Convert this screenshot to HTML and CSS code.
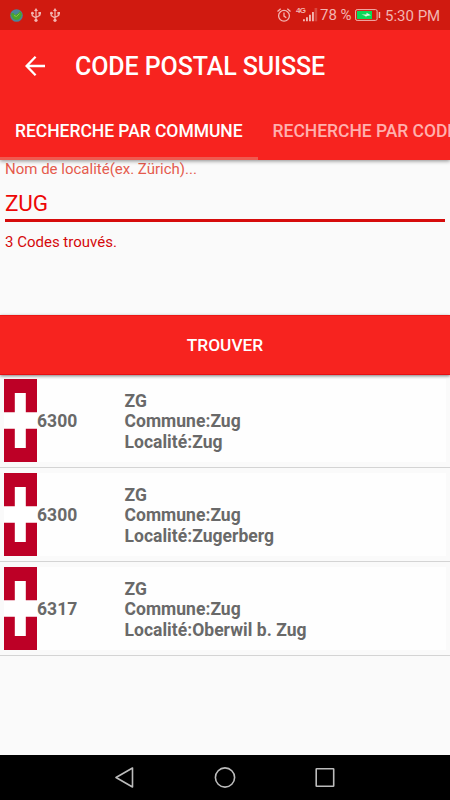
FILE: index.html
```html
<!DOCTYPE html>
<html lang="fr">
<head>
<meta charset="utf-8">
<title>Code Postal Suisse</title>
<link rel="stylesheet" href="styles.css">
</head>
<body>
<svg class="defs" width="0" height="0" aria-hidden="true">
  <symbol id="usb" viewBox="0 0 10 14">
    <path d="M5 2v10M1.200 5v2.600L5 10M8.800 5v2.300L5 9.500" fill="none" stroke="currentColor" stroke-width="1.200"/>
    <path d="M5 0l2 3H3z" fill="currentColor"/>
    <circle cx="5" cy="12.300" r="1.600" fill="currentColor"/>
    <circle cx="1.400" cy="5.200" r="1.400" fill="currentColor"/>
    <path d="M7.400 4h2.600v2.500H7.400z" fill="currentColor"/>
  </symbol>
  <symbol id="flag" viewBox="0 0 33 83" preserveAspectRatio="none">
    <path d="M0 0h33v83H0z" fill="#bd0026"/>
    <path d="M10.800 14h11v19.300H33v16.500H21.800V69h-11V49.800H0V33.300h10.800z" fill="#fff"/>
  </symbol>
</svg>
<header class="top">
  <div class="status">
    <svg class="globe" viewBox="0 0 13 13"><circle cx="6.500" cy="6.500" r="6.300" fill="#4a8499"/><path d="M1 4.500l2.500-.5L5 6l3-1.500 2-2.500 2 3-1 3-2 2.500-3.500.5L3 9.500 1.500 7z" fill="#49a52c"/><path d="M4 6.500l2.500 1 3-3" fill="none" stroke="#8bc34a"/></svg>
    <svg class="usb"><use href="#usb"/></svg>
    <svg class="usb"><use href="#usb"/></svg>
    <div class="status-right">
      <svg class="alarm" viewBox="0 0 14 14" fill="none" stroke="currentColor" stroke-width="1.300"><circle cx="7" cy="7.800" r="5.400"/><path d="M7 4.500v3.600l2.300 1.600M.5 3.600L3.700.7M13.500 3.600L10.300.7"/></svg>
      <span class="net">4G</span>
      <svg class="signal" viewBox="0 0 15 14" fill="currentColor"><path d="M0 11.300h1.900v2H0zM3 9.300h1.900v4H3zM6 6.800h1.900v6.500H6zM9 4h1.900v9.300H9z"/><path d="M11.600 0h2.600v13.300h-2.600z" opacity=".3"/></svg>
      <span class="pct">78 %</span>
      <svg class="battery" viewBox="0 0 26 12"><rect x=".6" y=".6" width="21.500" height="10.800" rx="1.500" fill="none" stroke="currentColor"/><path d="M2 2h15v8H2z" fill="#08d957"/><path d="M23.700 3h1.500v6h-1.500z" fill="currentColor"/><path d="M6.500 5.500l5 .1V3.800l4.500 2.500-4.500.8-.5 1.400-.5-1.600z" fill="#d9f7df"/></svg>
      <span class="time">5:30 PM</span>
    </div>
  </div>
  <div class="bar">
    <svg class="back" viewBox="0 0 20 20" fill="none" stroke="#fff" stroke-width="2.300"><path d="M20 10H2M10.600 .8L1.600 10l9 9.200"/></svg>
    <h1>CODE POSTAL SUISSE</h1>
  </div>
  <nav class="tabs">
    <div class="tab active"><span>RECHERCHE PAR COMMUNE</span></div>
    <div class="tab"><span>RECHERCHE PAR CODE</span></div>
  </nav>
</header>
<main>
  <section class="form">
    <div class="label"><span>Nom de localité(ex. Zürich)...</span></div>
    <div class="field"><span>ZUG</span></div>
    <div class="found"><span>3 Codes trouvés.</span></div>
  </section>
  <div class="find"><span>TROUVER</span></div>
  <ul class="results">
    <li><div class="card"><svg class="flag"><use href="#flag"/></svg><span class="code">6300</span><div class="info">ZG<br>Commune:Zug<br>Localité:Zug</div></div></li>
    <li><div class="card"><svg class="flag"><use href="#flag"/></svg><span class="code">6300</span><div class="info">ZG<br>Commune:Zug<br>Localité:Zugerberg</div></div></li>
    <li><div class="card"><svg class="flag"><use href="#flag"/></svg><span class="code">6317</span><div class="info">ZG<br>Commune:Zug<br>Localité:Oberwil b. Zug</div></div></li>
  </ul>
</main>
<footer class="navbar">
  <svg viewBox="0 0 22 22"><path d="M2 10.500L18.500 1v19z"/></svg>
  <svg viewBox="0 0 22 22"><circle cx="11" cy="10.500" r="9.600"/></svg>
  <svg viewBox="0 0 22 22"><rect x="2.200" y="1.700" width="17.500" height="17.500" rx=".5"/></svg>
</footer>
</body>
</html>
```
FILE: styles.css
```css
* { box-sizing: border-box; }
body {
  margin: 0;
  width: 450px;
  height: 800px;
  overflow: hidden;
  display: flex;
  flex-direction: column;
  background: #fafafa;
  font-family: Roboto, sans-serif;
  white-space: nowrap;
}
svg { display: block; flex: none; }
.defs { position: absolute; }
.top {
  height: 160px;
  flex: none;
  background: #f7231f;
  box-shadow: 0 1px 4px rgba(0, 0, 0, .45);
  z-index: 1;
}
.status {
  height: 30px;
  display: flex;
  align-items: center;
  padding: 0 10px;
  background: #d01a10;
  color: #f2b5b1;
}
.globe { width: 13px; height: 13px; }
.usb { width: 10px; height: 14px; margin-left: 8px; }
.usb + .usb { margin-left: 9px; }
.status-right { display: flex; align-items: center; margin-left: auto; }
.alarm { width: 14px; height: 14px; margin-right: 5px; }
.net {
  font-family: "Liberation Sans", sans-serif;
  font-size: 8px;
  font-weight: 700;
  line-height: 8px;
  margin-top: -8px;
  width: 7px;
  letter-spacing: -.8px;
}
.signal { width: 15px; height: 14px; margin-right: 2px; }
.pct { font-size: 15px; width: 35px; }
.battery { width: 26px; height: 12px; margin-right: 4px; }
.time { font-size: 15px; width: 55px; padding-top: 1px; }
.bar { height: 71px; display: flex; align-items: center; padding-left: 25px; }
.back { width: 20px; height: 20px; margin-right: 30px; }
h1 { margin: 1px 0 0; color: #fff; font-size: 25px; font-weight: 500; letter-spacing: -.1px; }
.tabs { height: 59px; display: flex; overflow: hidden; }
.tab {
  flex: none;
  height: 59px;
  padding: 0 15px;
  line-height: 60px;
  font-size: 17.500px;
  font-weight: 500;
  letter-spacing: -.04px;
  color: #ffb0ae;
}
.active { width: 257.600px; color: #fff; box-shadow: inset 0 -3px #ef5a50; }
.form { height: 155px; padding: 0 5px; }
.label { height: 19px; line-height: 18px; font-size: 15px; color: #e55a4d; }
.field {
  height: 43px;
  border-bottom: 3px solid #d60c0c;
  line-height: 49px;
  font-size: 22.500px;
  letter-spacing: -.2px;
  color: #ed0707;
}
.found { line-height: 20px; padding-top: 10px; font-size: 15px; color: #d5090b; }
.find {
  height: 60px;
  position: relative;
  display: flex;
  align-items: center;
  justify-content: center;
  background: #f7231f;
  color: #fff;
  font-size: 17.300px;
  font-weight: 500;
  box-shadow: 0 1px 3px rgba(0, 0, 0, .5), inset 0 1px #ec1513, inset 0 -1px #e60f12;
}
.results { list-style: none; margin: 0; padding: 0; }
li { height: 94px; padding: 5px 4px; border-bottom: 1px solid #d4d4d4; }
li:first-child { height: 93px; padding-top: 4px; }
.card { height: 83px; display: flex; align-items: center; background: #fefefe; }
.flag { width: 33px; height: 83px; }
.code, .info { color: #696969; font-weight: 700; font-size: 17.500px; line-height: 20.500px; letter-spacing: .03px; }
.code { width: 87.500px; padding-top: 2px; }
.info { padding-top: 2px; }
.navbar {
  margin-top: auto;
  height: 45px;
  display: flex;
  align-items: center;
  justify-content: center;
  gap: 78px;
  background: #000;
}
.navbar svg { width: 22px; height: 22px; fill: none; stroke: #bcbcbc; stroke-width: 1.600; stroke-linejoin: round; }
```
